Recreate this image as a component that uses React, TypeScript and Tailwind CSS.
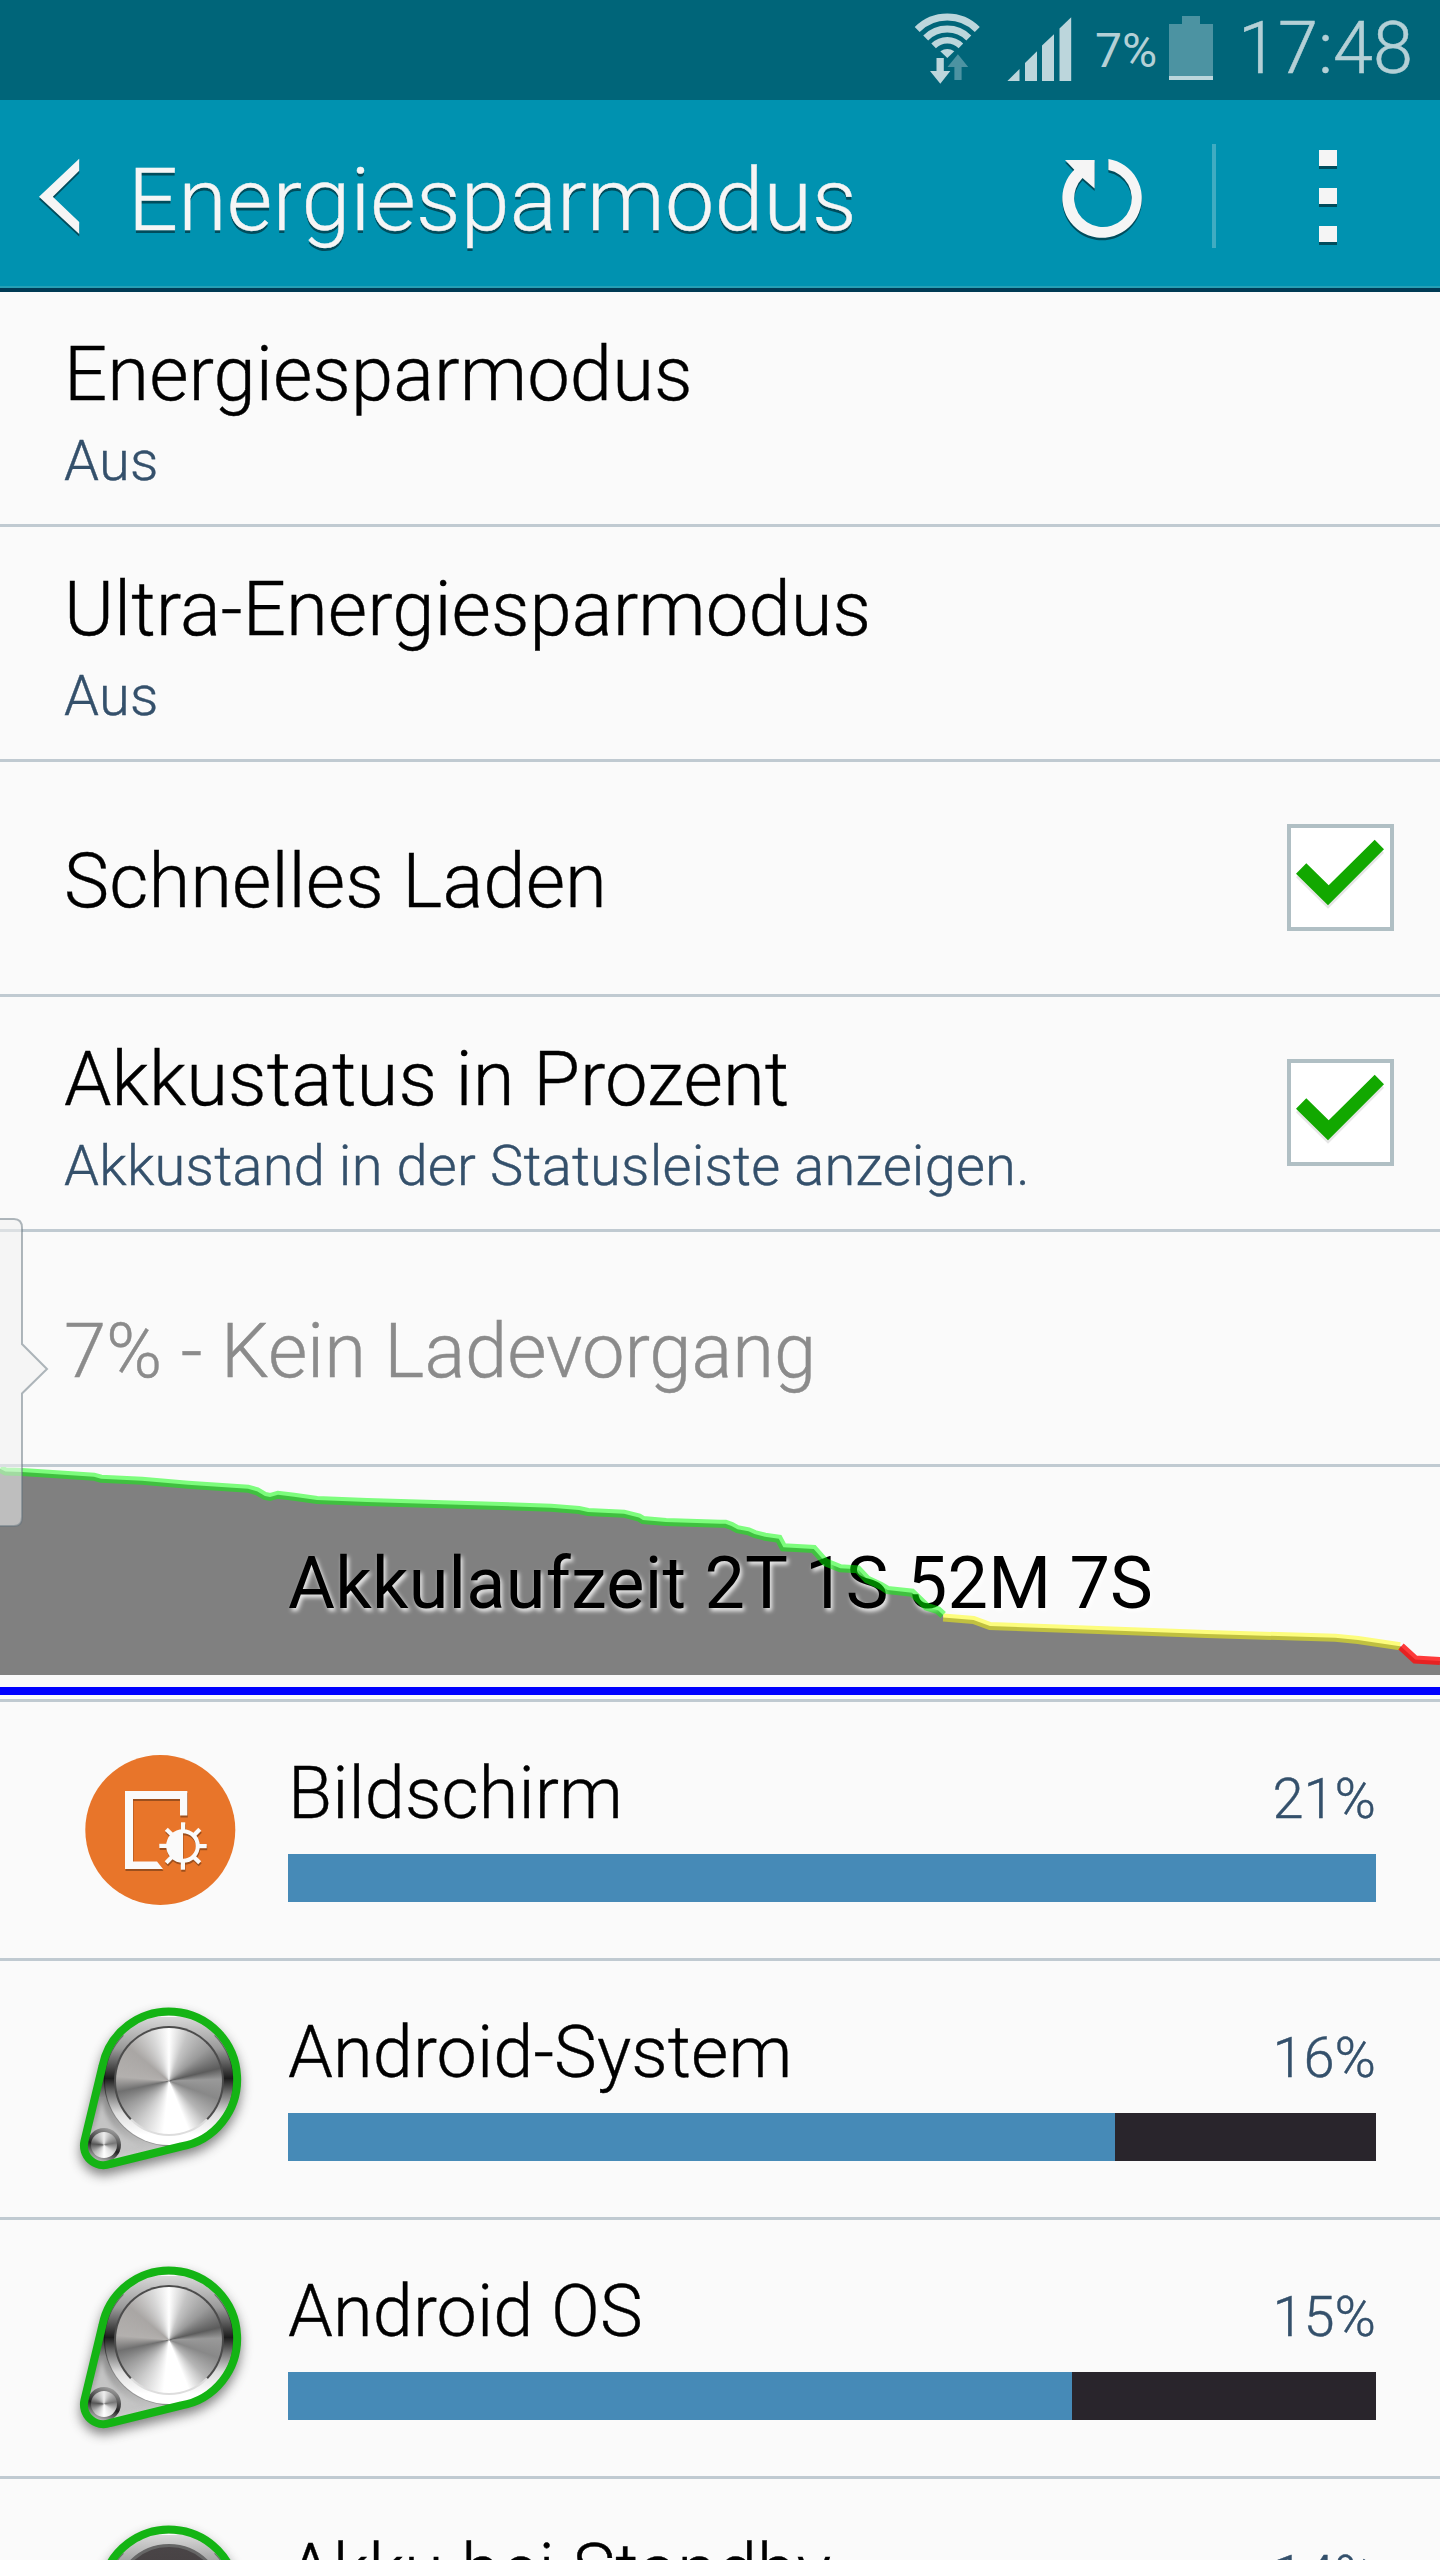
import type { ReactNode } from "react";

function WifiIcon() {
  return (
    <svg className="block h-[100px] w-[70px]" viewBox="912 0 70 100">
      <g fill="none" stroke="#bcd6dc">
        <path strokeWidth="7" d="M917.2 29.5A42.5 42.5 0 0 1 977.3 29.5" />
        <path strokeWidth="7" d="M925.7 38A30.5 30.5 0 0 1 968.8 38" />
        <path strokeWidth="6.5" d="M933.6 45.9A19.25 19.25 0 0 1 960.9 45.9" />
      </g>
      <path fill="#bcd6dc" d="M940.3 51.3Q947.3 46.5 954.3 51.3L947.3 58Z" />
      <path fill="#bcd6dc" d="M936.5 58H943.8V71H950.3L940.3 83.7L930 71H936.5Z" />
      <path fill="#4c93a2" d="M957.9 54.3L968.2 67H961.6V80H954.4V67H947.5Z" />
    </svg>
  );
}

function SignalIcon() {
  return (
    <svg className="block h-[100px] w-[66px]" viewBox="1006 0 66 100" fill="#bcd6dc">
      <path d="M1007.4 81L1019.5 69V81Z" />
      <path d="M1025 81V63L1037 51.3V81Z" />
      <path d="M1042 81V45.5L1054 34.3V81Z" />
      <path d="M1059.5 81V28.5L1071.2 17.3V81Z" />
    </svg>
  );
}

function StatusBar() {
  return (
    <div className="flex h-[100px] bg-[#006579] pl-[912px] text-[#b4d0d6]">
      <WifiIcon />
      <div className="ml-6">
        <SignalIcon />
      </div>
      <span className="ml-[23px] mt-[17px] w-[74px] whitespace-nowrap text-[48px] leading-[67px]">7%</span>
      <div className="mt-4 flex w-[44px] flex-col items-center">
        <div className="h-2 w-[18px] bg-[#4c93a2]" />
        <div className="h-[52px] w-full bg-[#4c93a2]" />
        <div className="h-1 w-full bg-[#bcd6dc]" />
      </div>
      <span className="ml-[25px] mt-[6px] whitespace-nowrap text-[72px] font-light leading-[85px] [-webkit-text-stroke:0.5px]">
        17:48
      </span>
    </div>
  );
}

const refreshPath =
  "M1108.4 158.9A39.7 39.7 0 1 1 1074.3 169.7L1065 160H1094.6V188.5L1082.5 178A28.8 28.8 0 1 0 1108.4 170Z";
const backPath = "M79.2 158.7V170.7L52.8 196.7L79.2 222V234L39 196.7Z";

function Header() {
  return (
    <header className="flex h-[192px] border-b-4 border-[#003a54] bg-[#0092b0]">
      <div className="flex h-[188px] w-full border-b-2 border-[#259fb5]">
        <svg className="block h-[186px] w-[128px] shrink-0" viewBox="0 100 128 186">
          <path d={backPath} fill="#004c5c" transform="translate(0 2.5)" />
          <path d={backPath} fill="#f5f5f5" />
        </svg>
        <h1 className="mt-[48px] w-[900px] whitespace-nowrap text-[88px] font-light leading-[104px] tracking-[0.15px] text-[#f5f5f5] [-webkit-text-stroke:0.4px] [text-shadow:0_3px_0_#004c5c]">
          Energiesparmodus
        </h1>
        <svg className="block h-[186px] w-[120px] shrink-0" viewBox="1028 100 120 186">
          <path d={refreshPath} fill="#004c5c" transform="translate(0 2.5)" />
          <path d={refreshPath} fill="#f5f5f5" />
        </svg>
        <div className="ml-16 mt-11 h-[104px] w-1 bg-[#40acc2]" />
        <div className="ml-[103px] mt-[50px] flex flex-col gap-[19px]">
          {[0, 1, 2].map((i) => (
            <div key={i} className="h-[19px] w-[18px] border-b-[3px] border-[#004c5c] bg-[#f5f5f5]" />
          ))}
        </div>
      </div>
    </header>
  );
}

const checkPath = "M19.3 39.3L9 49.7L41 81.3L97 25.3L87.7 15.7L41.7 61.3Z";

function Checkbox() {
  return (
    <div className="mb-[1px] mr-[46px] h-[107px] w-[107px] shrink-0 border-4 border-[#b0bfc4] bg-white">
      <svg className="block h-[99px] w-[99px]" viewBox="4 4 99 99">
        <path d={checkPath} fill="#e6e6e6" transform="translate(0 3.5)" />
        <path d={checkPath} fill="#12a800" />
      </svg>
    </div>
  );
}

type SettingProps = { title: string; summary?: string; checked?: boolean; muted?: boolean };

function Setting({ title, summary, checked, muted }: SettingProps) {
  return (
    <div className="flex h-[235px] items-center border-b-[3px] border-[#c0cad1] pl-16 font-light [-webkit-text-stroke:0.4px]">
      <div className={summary ? "flex flex-1 flex-col gap-[7px] pt-[6px]" : "flex-1 pt-[6px]"}>
        <div
          className={
            muted
              ? "whitespace-nowrap text-[76px] leading-[92px] tracking-[-0.05px] text-[#8b8b8b]"
              : "whitespace-nowrap text-[76px] leading-[92px] tracking-[0.08px] text-black"
          }
        >
          {title}
        </div>
        {summary && (
          <div className="whitespace-nowrap text-[56px] leading-[68px] tracking-[0.22px] text-[#34506b]">
            {summary}
          </div>
        )}
      </div>
      {checked && <Checkbox />}
    </div>
  );
}

const greenLine: [number, number][] = [
  [0, 1468.7], [5.5, 1471.5], [22, 1472], [94, 1476.7], [101, 1478.7], [142, 1480.7], [188, 1484.7], [248, 1488.7],
  [257, 1491.3], [265, 1496], [270, 1497], [278, 1494.7], [294, 1496.7], [317, 1500], [367, 1502], [459, 1504.7],
  [551, 1507.7], [579, 1510], [588, 1512], [624, 1513.7], [639, 1517.5], [643, 1520], [666, 1522], [720, 1523.7],
  [725.5, 1523.7], [731.5, 1526], [737.5, 1529.3], [748.5, 1531.3], [754.5, 1534], [765, 1536.7], [778.8, 1538.7],
  [783.4, 1547.3], [813.7, 1549], [825.6, 1562.3], [840.3, 1568.3], [857.8, 1569.3], [867, 1579.3], [880.7, 1585.7],
  [887.6, 1590], [912, 1592.7], [926.6, 1606.7], [938, 1610.3], [943.2, 1615],
];
const yellowLine: [number, number][] = [
  [943.2, 1617.5], [973.5, 1620], [990, 1626], [1050.6, 1628.3], [1206.8, 1634], [1335.3, 1637.7], [1358, 1640],
  [1400, 1646.3],
];
const redLine: [number, number][] = [[1401, 1646.5], [1415.2, 1659.5], [1440, 1661]];
const toPoints = (line: [number, number][]) => line.map((p) => p.join(",")).join(" ");

function BatteryGraph() {
  const area = [...greenLine, ...yellowLine, ...redLine];
  return (
    <div className="relative h-[235px] border-b-[3px] border-[#c0cad1]">
      <svg className="absolute left-0 top-0 h-[232px] w-[1440px]" viewBox="0 1467 1440 232">
        <polygon points={`0,1675 ${toPoints(area)} 1440,1675`} fill="#808080" />
        <rect x="0" y="1687" width="1440" height="8" fill="#0000ff" />
      </svg>
      <div className="relative whitespace-nowrap pl-72 pt-[75px] text-[72px] leading-[84px] tracking-[0.24px] text-black [text-shadow:2px_3px_4px_#ffffffdd]">
        Akkulaufzeit 2T 1S 52M 7S
      </div>
      <svg className="absolute left-0 top-0 h-[232px] w-[1440px]" viewBox="0 1467 1440 232">
        <g fill="none" strokeWidth="8">
          <polyline points={toPoints(greenLine)} stroke="#00ff00" strokeOpacity="0.5" />
          <polyline points={toPoints(yellowLine)} stroke="#ffff00" strokeOpacity="0.5" />
          <polyline points={toPoints(redLine)} stroke="#ff0a0a" strokeOpacity="0.8" />
        </g>
      </svg>
    </div>
  );
}

function EdgeHandle() {
  return (
    <svg className="absolute left-0 top-[1216px] h-[314px] w-[50px]" viewBox="0 1216 50 314">
      <path
        d="M-4 1219H14Q22 1219 22 1228V1344L47 1369L22 1393.500V1517Q22 1526 14 1526H-4Z"
        fill="#f0f0f0"
        fillOpacity="0.55"
        stroke="#62717b"
        strokeOpacity="0.5"
        strokeWidth="2"
      />
    </svg>
  );
}

function ScreenGlyph() {
  const rays = [0, 45, 90, 135, 180, 225, 270, 315];
  return (
    <>
      <path d="M65 61H127.300V85.500H120V69H73V131.500H97L103 139H65Z" />
      <circle cx="123" cy="116" r="14.800" fill="none" stroke="currentColor" strokeWidth="4" />
      <path d="M123 101A15 15 0 0 0 123 131Z" />
      {rays.map((r) => (
        <rect key={r} x="121" y="92.300" width="4.200" height="8" transform={`rotate(${r} 123 116)`} />
      ))}
    </>
  );
}

function ScreenIcon() {
  return (
    <svg className="block h-[256px] w-[228px] shrink-0" viewBox="0 -28 228 256">
      <circle cx="100.300" cy="100" r="75" fill="#e8752a" />
      <g fill="#9c4f1d" className="text-[#9c4f1d]" transform="translate(0.500 2)">
        <ScreenGlyph />
      </g>
      <g fill="#fafafa" className="text-[#fafafa]">
        <ScreenGlyph />
      </g>
    </svg>
  );
}

const beltPath =
  "M42.500 86A68 68 0 1 1 121 166.500L50 184A19.500 19.500 0 0 1 24.500 161Z";

function SystemIcon({ dark }: { dark?: boolean }) {
  return (
    <svg className="block h-[256px] w-[228px] shrink-0" viewBox="0 -19 228 256">
      <defs>
        <linearGradient id="plate" x1="0" y1="0" x2="0" y2="1">
          <stop offset="0" stopColor="#e4e4e4" />
          <stop offset="0.250" stopColor="#a39f9f" />
          <stop offset="0.420" stopColor="#1c1c1c" />
          <stop offset="0.560" stopColor="#8b8b8b" />
          <stop offset="1" stopColor="#d6d6d6" />
        </linearGradient>
      </defs>
      <path d={beltPath} fill="#333" opacity="0.600" stroke="#333" strokeWidth="8" className="blur-[6px]" transform="translate(0 6)" />
      <path d={beltPath} fill="url(#plate)" />
      <path d="M42 118Q45 150 80 166L50 178L32 158Z" fill="#c4c4c4" className="blur-[2px]" />
      <foreignObject x="44" y="36" width="130" height="130">
        <div className="h-[130px] w-[130px] rounded-full border border-[#00000066] border-t-transparent bg-[linear-gradient(180deg,#d8d8d8_0%,#999_25%,#1c1c1c_48%,#777_60%,#ddd_75%,#fff_92%)] p-[9px]">
          <div
            className={
              dark
                ? "h-[110px] w-[110px] rounded-full border-[3px] border-[#666] bg-[linear-gradient(180deg,#4a4547,#3a3536)]"
                : "h-[110px] w-[110px] rounded-full border-2 border-[#4c4c4c] border-b-[#ddd] bg-[conic-gradient(from_0deg_at_50%_50%,#ffffff_0deg,#c4c4c4_22deg,#9a9a9a_50deg,#5c5c5c_76deg,#999999_88deg,#888888_110deg,#b5b5b5_135deg,#ffffff_158deg,#ffffff_186deg,#cccccc_215deg,#9b9b9b_240deg,#707070_258deg,#b3b0ae_275deg,#a9a6a4_310deg,#d8d8d8_340deg,#ffffff_360deg)]"
            }
          />
        </div>
      </foreignObject>
      <foreignObject x="27" y="148" width="34" height="34">
        <div className="h-[34px] w-[34px] rounded-full bg-[linear-gradient(200deg,#bbb,#222_55%,#eee)] p-[4px]">
          <div className="h-[26px] w-[26px] rounded-full bg-[conic-gradient(#eee,#777_80deg,#ddd_130deg,#fff_180deg,#bbb_230deg,#555_275deg,#aaa_310deg,#eee)]" />
        </div>
      </foreignObject>
      <path d={beltPath} fill="none" stroke="#14b414" strokeWidth="8" strokeLinejoin="round" className="blur-[0.5px]" />
    </svg>
  );
}

function UsageRow({ icon, name, percent, fill }: { icon: ReactNode; name: string; percent: string; fill: number }) {
  return (
    <div className="flex h-[259px] border-b-[3px] border-[#c0cad1] pl-[60px]">
      {icon}
      <div className="w-[1088px] pt-[50px]">
        <div className="flex items-baseline justify-between whitespace-nowrap font-light [-webkit-text-stroke:0.4px]">
          <span className="text-[72px] leading-[84px] tracking-[0.1px] text-black">{name}</span>
          <span className="text-[56px] leading-[68px] text-[#34506b]">{percent}</span>
        </div>
        <div className="mt-[18px] h-12 bg-[#29252c]">
          <div className="h-12 bg-[#468ab7]" style={{ width: `${fill}px` }} />
        </div>
      </div>
    </div>
  );
}

export default function App() {
  return (
    <div className="relative h-[2560px] w-[1440px] overflow-hidden bg-[#fafafa] font-['Roboto',sans-serif]">
      <StatusBar />
      <Header />
      <Setting title="Energiesparmodus" summary="Aus" />
      <Setting title="Ultra-Energiesparmodus" summary="Aus" />
      <Setting title="Schnelles Laden" checked />
      <Setting title="Akkustatus in Prozent" summary="Akkustand in der Statusleiste anzeigen." checked />
      <Setting title="7% - Kein Ladevorgang" muted />
      <BatteryGraph />
      <UsageRow icon={<ScreenIcon />} name="Bildschirm" percent="21%" fill={1088} />
      <UsageRow icon={<SystemIcon />} name="Android-System" percent="16%" fill={827} />
      <UsageRow icon={<SystemIcon />} name="Android OS" percent="15%" fill={784} />
      <UsageRow icon={<SystemIcon dark />} name="Akku bei Standby" percent="14%" fill={725} />
      <EdgeHandle />
    </div>
  );
}
